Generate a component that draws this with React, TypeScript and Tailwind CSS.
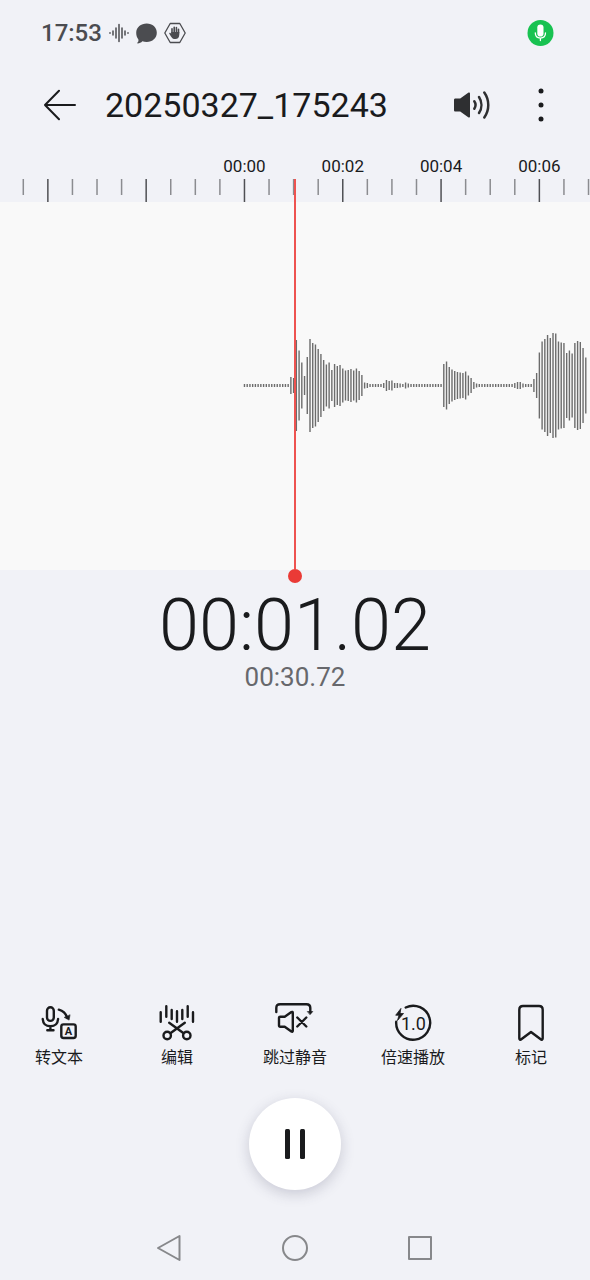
import { useState } from 'react';

const PX_PER_SECOND = 49.15;
const BARS_PER_SECOND = 18;
const POSITION = 1.02;

// Half height of each bar, 18 samples per second
const quiet = (n: number): number[] => Array(n).fill(1.5);
const samples: number[] = [
  ...quiet(17), 8.5, 7.5, 45.5, 35, 23, 9.5, 28.5, 46.5, 42.5, 41, 36.5, 31.5, 25.5, 21, 23, 15.5, 21.5, 19.5,
  20.5, 17, 15, 15.5, 16.5, 15, 17, 14.5, 10.5, 3, 2.5, ...quiet(5), 2.5, 5.5, 4.5, 5, 2.5, 2.5, 2, 1.5, 3, 2,
  ...quiet(12), 21.5, 24, 18.5, 16, 14.5, 13.5, 13, 12.5, 14, 10, 7.5, 3.5, 2, ...quiet(13), 2.5, 3.5, 3.5, 2,
  ...quiet(3), 6.5, 12.5, 33, 44, 46.5, 50.5, 47.5, 52.5, 52, 44, 43, 42.5, 32.5, 35, 32, 42.5, 44.5, 43.5,
  37.5, 28,
];

// One tick every half second
const ticks = Array.from({ length: 24 }, (_, i) => i - 9);

const timeToX = (t: number) => (t - POSITION) * PX_PER_SECOND - 0.4;

function StatusBar() {
  return (
    <div className="flex h-[66px] items-center justify-between pl-[41px] pr-9">
      <div className="flex items-center gap-[7px] text-[#4b4c50]">
        <span className="text-2xl font-medium">17:53</span>
        <svg width="20" height="20" viewBox="0 0 20 20" stroke="currentColor" strokeWidth="1.5" strokeLinecap="round">
          <path d="M1 9.7v.6M4 8v4M7 5v10M10 1.5v17M13 5v10M16 8v4M19 9.7v.6" />
        </svg>
        <svg width="21" height="21" viewBox="0 0 21 21" fill="currentColor">
          <path d="M10.7.6C16.5.6 20.8 4.500 20.8 9.700S16.500 19 10.700 19c-1.600 0-3-.3-4.300-.8-1.200 1.400-3 2.200-4.700 2.200-.6 0-.6-.5-.2-.8.9-.7 1.100-1.900.9-3.200C1 14.700.2 12.400.2 9.700.2 4.500 5 .6 10.700.6z" />
        </svg>
        <svg width="22" height="22" viewBox="0 0 22 22" fill="none" stroke="currentColor">
          <path d="M6.200 1.500h9.600L21.200 11l-5.400 9.500H6.200L.8 11z" strokeWidth="1.300" strokeLinejoin="round" />
          <path d="M8 11V6.700M10.200 10V5.300M12.400 10V5.500M14.500 11V7.200" strokeWidth="1.600" strokeLinecap="round" />
          <path d="M7.200 10h8.100v2.500c0 3-1.600 4.500-4 4.500-2.200 0-3.300-.9-4.300-2.600l-1.700-2.700c-.3-.6.500-1.200 1.200-.6l.7.700z" fill="currentColor" stroke="none" />
        </svg>
      </div>
      <svg width="27" height="27" viewBox="0 0 27 27" fill="none">
        <circle cx="13.500" cy="13" r="13" fill="#18c251" />
        <rect x="10.300" y="4.500" width="6.200" height="12" rx="3.100" fill="#fff" />
        <path d="M8.300 12.800c0 3.400 2.100 5.300 5.100 5.300s5.100-1.900 5.100-5.300M13.400 18.100v2.400" stroke="#fff" strokeWidth="1.300" strokeLinecap="round" />
      </svg>
    </div>
  );
}

function Header() {
  return (
    <header className="flex h-[78px] items-center pl-11 pr-10">
      <button type="button" aria-label="返回">
        <svg width="32" height="32" viewBox="0 0 32 32" fill="none" stroke="currentColor" strokeWidth="2" strokeLinecap="round" strokeLinejoin="round">
          <path d="M31 16H1M15 1.700L1 16l14 14.300" />
        </svg>
      </button>
      <h1 className="ml-[29px] flex-1 text-[34px] font-normal leading-10">20250327_175243</h1>
      <button type="button" aria-label="扬声器" className="text-[#2e2f31]">
        <svg width="38" height="30" viewBox="0 0 38 30" fill="none" stroke="currentColor" strokeWidth="2.500" strokeLinecap="round">
          <path d="M2.500 8.500h4.700l8-5.700c.9-.6 1.800-.2 1.800.8v22.800c0 1-.9 1.400-1.800.8l-8-5.700H2.500C1.500 21.500 1 21 1 20V10c0-1 .5-1.500 1.500-1.500z" fill="currentColor" stroke="none" />
          <path d="M21.300 11.300c1.500 2.200 1.500 5.200 0 7.400M26 7c3.200 4.800 3.200 11.200 0 16M31.300 2.500c5.300 7.500 5.300 17.500 0 25" />
        </svg>
      </button>
      <button type="button" aria-label="更多" className="ml-[41px]">
        <svg width="18" height="34" viewBox="0 0 18 34" fill="currentColor">
          <circle cx="9" cy="3" r="2.500" />
          <circle cx="9" cy="17" r="2.500" />
          <circle cx="9" cy="31" r="2.500" />
        </svg>
      </button>
    </header>
  );
}

function Timeline() {
  return (
    <section className="relative">
      <svg className="block h-[58px] w-full">
        <svg x="50%" overflow="visible">
          {ticks.map((n) => {
            const major = n % 4 === 0;
            return (
              <g key={n}>
                <line
                  x1={timeToX(n / 2)}
                  x2={timeToX(n / 2)}
                  y1={35}
                  y2={major ? 58 : 51}
                  stroke={major ? '#4f5054' : '#8b8c90'}
                  strokeWidth={1.5}
                />
                {major && n >= 0 && (
                  <text x={timeToX(n / 2)} y={28} textAnchor="middle" className="fill-[#1a1b1d] text-[17px]">
                    00:0{n / 2}
                  </text>
                )}
              </g>
            );
          })}
        </svg>
      </svg>
      <svg className="block h-92 w-full bg-[#f9f9f9]">
        <svg x="50%" y="50%" overflow="visible">
          {samples.map((h, i) => {
            const x = timeToX(i / BARS_PER_SECOND);
            return <line key={i} x1={x} x2={x} y1={-h - 0.5} y2={h - 0.5} stroke="#6c6c6c" strokeWidth={1.4} />;
          })}
        </svg>
      </svg>
      <div className="absolute -bottom-[13px] left-1/2 top-[35px] flex -translate-x-1/2 flex-col items-center">
        <div className="w-0.5 flex-1 bg-[#ee5350]" />
        <div className="size-3.5 rounded-full bg-[#ea3a36]" />
      </div>
    </section>
  );
}

const iconProps = {
  width: 40,
  height: 40,
  viewBox: '0 0 40 40',
  fill: 'none',
  stroke: 'currentColor',
  strokeWidth: 2.4,
  strokeLinecap: 'round',
  strokeLinejoin: 'round',
} as const;

const tools = [
  {
    label: '转文本',
    icon: (
      <svg {...iconProps}>
        <rect x="8" y="4.300" width="6.800" height="13.600" rx="3.400" />
        <path d="M3.700 16c.4 4.700 3.300 7.300 7.700 7.300s7.300-2.600 7.700-7.300M11.400 23.300v4M8.300 27.300h6.200" />
        <path d="M19.800 6.700c4.200 1 7 3.800 8.400 8" />
        <path d="M25.500 14.600l4.600 2.500.9-5z" fill="currentColor" strokeWidth=".6" />
        <rect x="22.300" y="21.400" width="14.400" height="13.600" rx="2.200" />
        <text x="29.500" y="32.200" textAnchor="middle" fill="currentColor" stroke="none" className="text-[11px] font-bold">A</text>
      </svg>
    ),
  },
  {
    label: '编辑',
    icon: (
      <svg {...iconProps}>
        <path d="M3.700 9.200v9.600M9.300 3.300v10.400M14.700 7v9M20 8.300v10.400M25.300 7v9M30.700 3.300v10.400M36 9.200v9.600" />
        <path d="M12.200 19.800L26.300 30M27.800 19.800L13.700 30" />
        <circle cx="10.200" cy="32.500" r="3.700" />
        <circle cx="29.800" cy="32.500" r="3.700" />
      </svg>
    ),
  },
  {
    label: '跳过静音',
    icon: (
      <svg {...iconProps}>
        <path d="M1.300 9V5c0-2.500 1.200-3.800 3.800-3.800h26.400c2.600 0 3.800 1.300 3.800 3.800v4" />
        <path d="M32.600 8.500h5.200l-2.600 3z" fill="currentColor" strokeWidth=".6" />
        <path d="M5.200 13.700h4.500l6.700-4.600c.8-.5 1.400-.2 1.400.7v18c0 .9-.6 1.200-1.400.7l-6.700-4.800H5.200c-.8 0-1.200-.4-1.200-1.200v-7.600c0-.8.4-1.200 1.200-1.200zM22.300 14.500l9 9M31.300 14.500l-9 9" />
      </svg>
    ),
  },
  {
    label: '倍速播放',
    icon: (
      <svg {...iconProps}>
        <path d="M12.700 4.500A17 17 0 1 1 3.200 18.800" />
        <path d="M7.700 5.700l-5 6.500H6l-1.500 5.300 6-7H7.300z" fill="currentColor" strokeWidth=".8" />
        <text x="20.500" y="27" textAnchor="middle" fill="currentColor" stroke="none" className="text-[18px]">1.0</text>
      </svg>
    ),
  },
  {
    label: '标记',
    icon: (
      <svg {...iconProps}>
        <path d="M12 3h16c2.500 0 3.700 1.200 3.700 3.700v28.600c0 1.300-1 1.800-2 1L20 29l-9.700 7.300c-1 .8-2 .3-2-1V6.700C8.300 4.200 9.500 3 12 3z" />
      </svg>
    ),
  },
];

export default function App() {
  const [playing, setPlaying] = useState(true);

  return (
    <div className="flex min-h-screen flex-col bg-[#f1f2f7] font-[Roboto,'Noto_Sans_CJK_SC',sans-serif] text-[#1a1b1d]">
      <StatusBar />
      <Header />
      <Timeline />

      <div className="flex flex-col items-center pt-5">
        <div className="text-7xl font-light leading-[72px]">00:01.02</div>
        <div className="text-[26px] leading-[30px] text-[#67686c]">00:30.72</div>
      </div>

      <div className="mt-auto grid grid-cols-5">
        {tools.map((tool) => (
          <button key={tool.label} type="button" className="flex flex-col items-center gap-[5px]">
            {tool.icon}
            <span className="text-base leading-5">{tool.label}</span>
          </button>
        ))}
      </div>

      <button
        type="button"
        aria-label={playing ? '暂停' : '播放'}
        onClick={() => setPlaying(!playing)}
        className="mb-[26px] mt-[30px] flex size-23 items-center justify-center self-center rounded-full bg-white shadow-[0_4px_14px_rgba(60,60,90,0.22)]"
      >
        <svg width="30" height="30" viewBox="0 0 30 30" fill="currentColor">
          {playing ? (
            <>
              <rect x="5" width="5" height="30" rx="1.500" />
              <rect x="20" width="5" height="30" rx="1.500" />
            </>
          ) : (
            <path d="M7 2l19 13L7 28z" />
          )}
        </svg>
      </button>

      <nav className="flex h-16 items-center justify-center gap-[98px] text-[#87888b]">
        <button type="button" aria-label="返回">
          <svg width="28" height="28" viewBox="0 0 28 28" fill="none" stroke="currentColor" strokeWidth="2" strokeLinejoin="round">
            <path d="M24.500 2v24L3 14z" />
          </svg>
        </button>
        <button type="button" aria-label="主屏幕">
          <svg width="28" height="28" viewBox="0 0 28 28" fill="none" stroke="currentColor" strokeWidth="2">
            <circle cx="14" cy="14" r="12" />
          </svg>
        </button>
        <button type="button" aria-label="最近任务">
          <svg width="28" height="28" viewBox="0 0 28 28" fill="none" stroke="currentColor" strokeWidth="2" strokeLinejoin="round">
            <rect x="2" y="3" width="22" height="22" />
          </svg>
        </button>
      </nav>
    </div>
  );
}
